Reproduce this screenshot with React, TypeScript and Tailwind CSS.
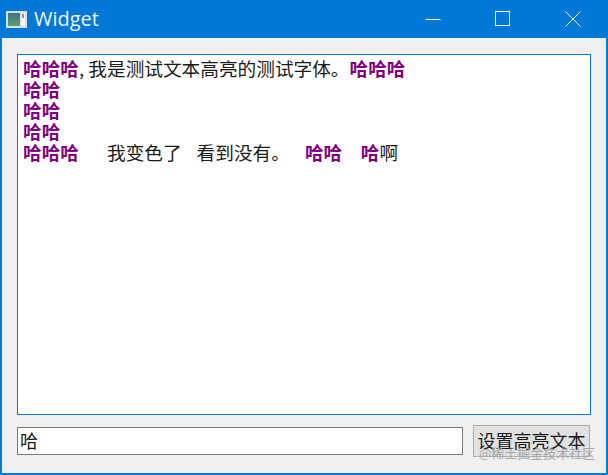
export default function App() {
  const Hi = ({ children }: { children: string }) => (
    <span className="font-bold text-[#800080]">{children}</span>
  );
  return (
    <div className="relative flex h-[475px] w-[608px] flex-col overflow-hidden bg-[#0078d7] font-['Liberation_Serif','Noto_Sans_CJK_SC',serif]">
      <div className="flex h-[38px] shrink-0 items-center pl-[6px] text-white">
        <svg width="21" height="17" viewBox="0 0 21 17" className="shrink-0">
          <defs>
            <linearGradient id="ic" x1="0" y1="0" x2="0" y2="1">
              <stop offset="0" stopColor="#3f6f8e" />
              <stop offset="1" stopColor="#5ea070" />
            </linearGradient>
          </defs>
          <rect x="0" y="0" width="21" height="17" fill="#d5dfe6" />
          <rect x="2" y="2" width="12" height="13" fill="url(#ic)" />
          <rect x="15" y="2" width="4" height="13" fill="#f4f7f8" />
          <rect x="16" y="3" width="2" height="4" fill="#7f98a8" />
        </svg>
        <span className="ml-[7px] font-['Open_Sans',sans-serif] text-[20px] leading-none text-[#eef7ff]">Widget</span>
        <div className="ml-auto flex h-full">
          <div className="flex w-[46px] items-center justify-center">
            <svg width="16" height="16" viewBox="0 0 16 16"><path d="M0.5 8.5H15.5" stroke="#fff" strokeWidth="1" /></svg>
          </div>
          <div className="ml-[24px] flex w-[46px] items-center justify-center">
            <svg width="16" height="16" viewBox="0 0 16 16"><rect x="0.5" y="0.5" width="14" height="14" fill="none" stroke="#fff" strokeWidth="1" /></svg>
          </div>
          <div className="ml-[24px] mr-[12px] flex w-[46px] items-center justify-center">
            <svg width="16" height="16" viewBox="0 0 16 16"><path d="M0.5 0.5L15.5 15.5M15.5 0.5L0.5 15.5" stroke="#fff" strokeWidth="1" /></svg>
          </div>
        </div>
      </div>
      <div className="mx-[2px] mb-[2px] flex min-h-0 flex-1 flex-col bg-[#f0f0f0] pt-[16px] pl-[15px] pr-[16px]">
        <div className="h-[361px] w-[574px] border border-[#0078d7] bg-white pl-[5px] pt-[2px] text-[18.67px] leading-[21px] whitespace-pre text-[#1a1a1a] font-['Noto_Sans_CJK_SC',serif]">
          <div><Hi>哈哈哈</Hi>, 我是测试文本高亮的测试字体。<Hi>哈哈哈</Hi></div>
          <div><Hi>哈哈</Hi></div>
          <div><Hi>哈哈</Hi></div>
          <div><Hi>哈哈</Hi></div>
          <div>
            <Hi>哈哈哈</Hi>
            <span className="ml-[28px]">我变色了</span>
            <span className="ml-[15px]">看到没有。</span>
            <span className="ml-[15px]"><Hi>哈哈</Hi></span>
            <span className="ml-[18.67px]"><Hi>哈</Hi>啊</span>
          </div>
        </div>
        <div className="mt-[10px] flex items-center">
          <div className="flex h-[28px] w-[446px] items-center border border-[#7a7a7a] bg-white pl-[2px] text-[18px] leading-none text-[#1a1a1a] font-['Noto_Sans_CJK_SC',serif]">
            <span className="-translate-y-px">哈</span>
          </div>
          <button className="ml-[10px] h-[32px] w-[117px] border border-[#adadad] bg-[#e1e1e1] pb-[2px] text-[18px] leading-none text-[#1a1a1a] font-['Noto_Sans_CJK_SC',serif]">设置高亮文本</button>
        </div>
      </div>
      <div className="absolute left-[479px] top-[445px] text-[13px] leading-[15px] text-[#a8a8a8] font-['Noto_Sans_CJK_SC',sans-serif]">@稀土掘金技术社区</div>
    </div>
  );
}
